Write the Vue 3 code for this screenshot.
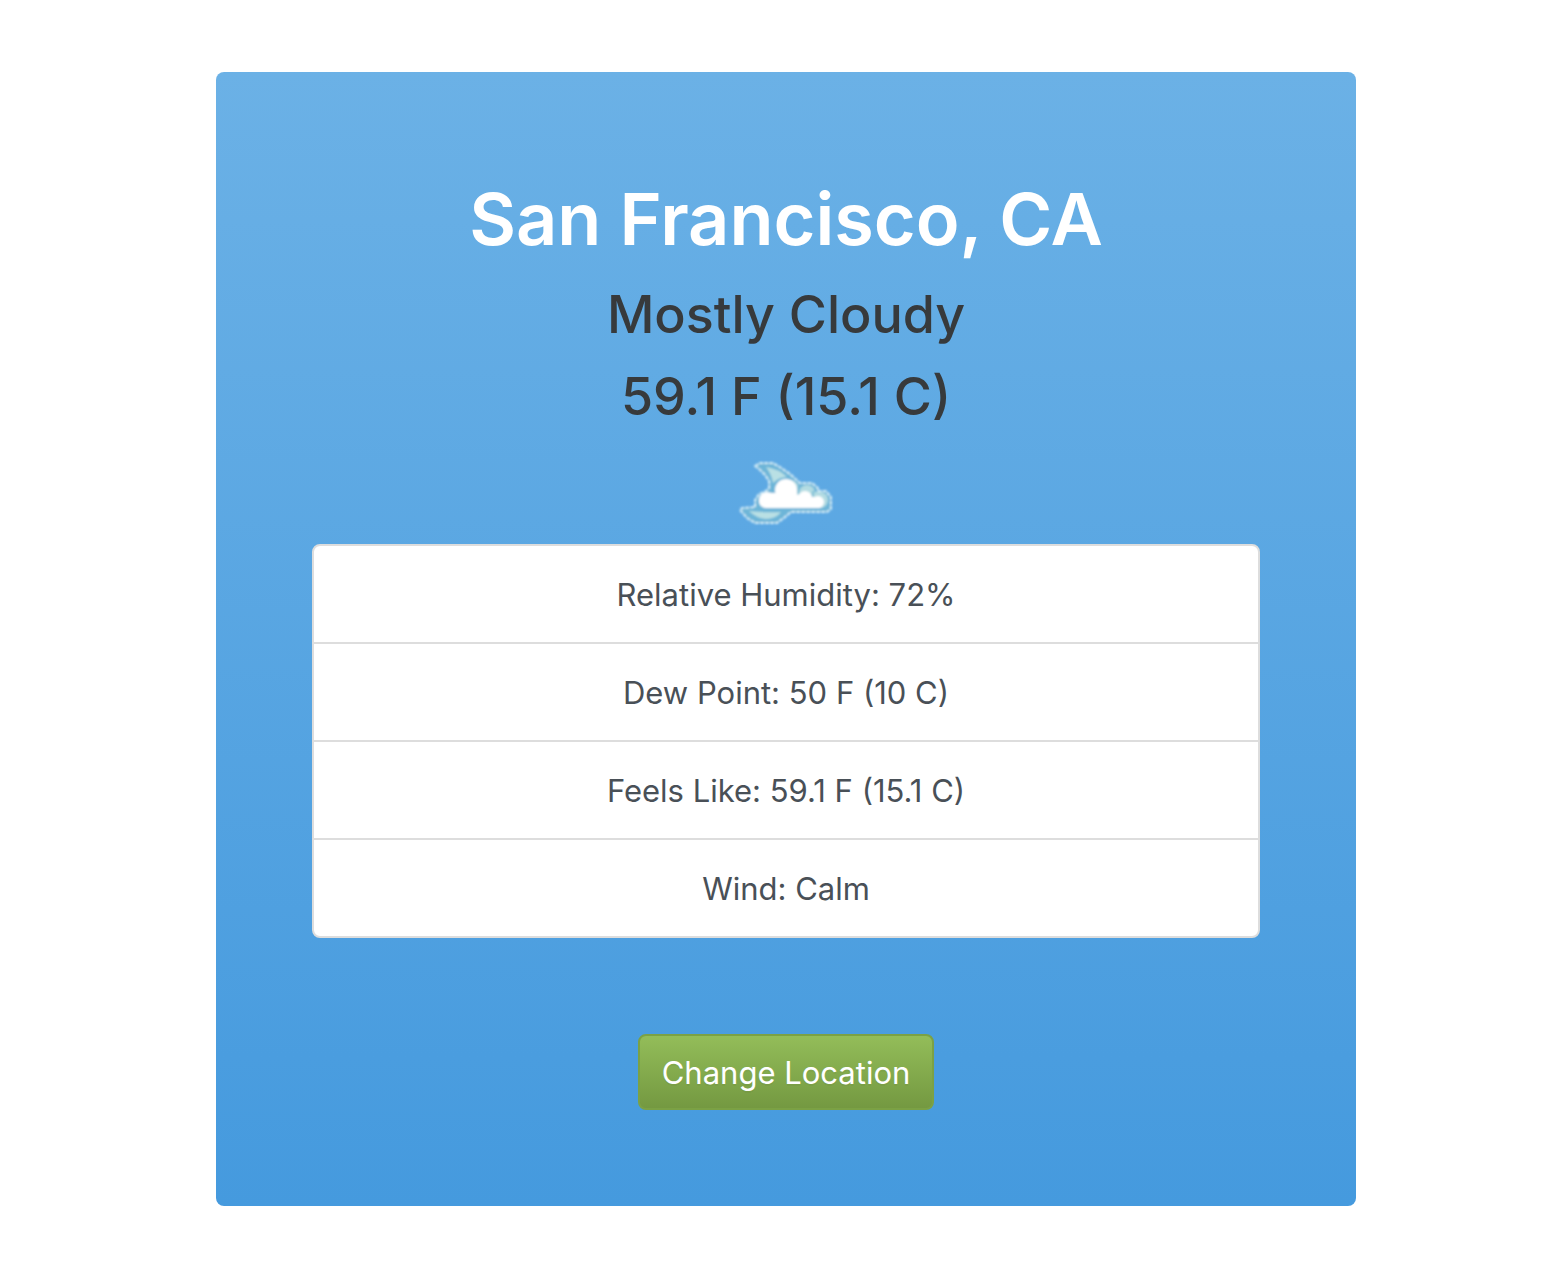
<script setup>
const place = {
  name: 'San Francisco, CA',
  sky: 'Mostly Cloudy',
  temperature: '59.1 F (15.1 C)',
}

const details = [
  { label: 'Relative Humidity', value: '72%' },
  { label: 'Dew Point', value: '50 F (10 C)' },
  { label: 'Feels Like', value: '59.1 F (15.1 C)' },
  { label: 'Wind', value: 'Calm' },
]
</script>

<template>
  <main class="page">
    <section class="card">
      <h1 class="title">{{ place.name }}</h1>
      <h3 class="subtitle">{{ place.sky }}</h3>
      <h3 class="subtitle">{{ place.temperature }}</h3>
      <div class="picture">
        <svg class="cloud" viewBox="0 0 112 84" role="img" aria-label="Mostly cloudy night">
          <defs>
            <filter id="soft" x="-10%" y="-10%" width="120%" height="120%">
              <feGaussianBlur stdDeviation="0.8" />
            </filter>
          </defs>
          <g filter="url(#soft)" stroke-linejoin="round">
            <!-- silhouette of moon and cloud with its pale broken rim -->
            <path
              d="M25 16 L30 13 H43 L50 17 L60 24 L70 33 H82 L88 38 V41 H96 L101 47 V59 L97 62 H61 L54 68 L47 73 H25 L17 68 L10 60 L12 58 L25 57 V50 L29 44 L36 41 L39 38 V31 L35 25 L29 19 Z"
              fill="#6db5d8" stroke="#d3ecf7" stroke-width="2" stroke-dasharray="4 1"
            />
            <!-- lit parts of the crescent -->
            <path d="M36 17 Q49 19 57 27 Q49 27 43 33 Q42 25 36 17 Z" fill="#b9e0e4" />
            <path d="M19 61 Q36 63 51 62 Q46 69 36 69 Q26 68 19 61 Z" fill="#b9e0e4" />
            <!-- shaded side of the cloud -->
            <g fill="#b3dce2">
              <circle cx="60" cy="39" r="9" />
              <circle cx="77" cy="43" r="8" />
              <circle cx="90" cy="50" r="8" />
              <path d="M60 42 H90 V58 H60 Z" />
            </g>
            <path d="M69 35 Q67 39 69 45 M84 41 Q82 43 83 48" fill="none" stroke="#7bbdd6" stroke-width="2" />
            <!-- lit side of the cloud -->
            <g fill="#ffffff">
              <circle cx="37" cy="50" r="8" />
              <circle cx="56" cy="40" r="11" />
              <circle cx="75" cy="48" r="7" />
              <circle cx="88" cy="52" r="6" />
              <path d="M34 43 H46 V38 H67 V45 L76 42 L82 47 H88 L90 58 H37 Q29 58 29 51 Z" />
            </g>
          </g>
        </svg>
      </div>
      <ul class="details">
        <li v-for="item in details" :key="item.label" class="detail">
          {{ item.label }}: {{ item.value }}
        </li>
      </ul>
      <button type="button" class="change">Change Location</button>
    </section>
  </main>
</template>

<style>
body {
  margin: 0;
  background: #ffffff;
}
</style>

<style scoped>
.page {
  box-sizing: border-box;
  padding: 72px 194px 62px 216px;
  font-family: Inter, "Liberation Sans", sans-serif;
}

.card {
  display: flex;
  flex-direction: column;
  align-items: center;
  padding: 96px;
  border-radius: 8px;
  background: linear-gradient(#6bb1e6 0%, #459ade 100%);
  text-align: center;
}

.title,
.subtitle {
  margin: 0 0 12px;
  font-weight: 500;
}

.title {
  margin-bottom: 10px;
  color: #ffffff;
  font-size: 72px;
  font-weight: 600;
  line-height: 102px;
}

.subtitle {
  color: #373a3c;
  font-size: 52px;
  line-height: 70px;
}

.picture {
  display: flex;
  align-items: center;
  height: 100px;
  box-sizing: border-box;
  padding-bottom: 4px;
}

.cloud {
  display: block;
  width: 112px;
  height: 84px;
}

.details {
  box-sizing: border-box;
  width: 100%;
  margin: 0 0 96px;
  padding: 0;
  overflow: hidden;
  border: 2px solid #dddddd;
  border-radius: 8px;
  background: #ffffff;
  list-style: none;
}

.detail {
  padding: 25px 40px 23px;
  color: #495057;
  font-size: 31px;
  line-height: 48px;
}

.detail + .detail {
  border-top: 2px solid #dddddd;
}

.change {
  padding: 13px 22px 11px;
  border: 2px solid #7ba145;
  border-radius: 8px;
  background: linear-gradient(#93bd59, #749941);
  color: #ffffff;
  font-family: inherit;
  font-size: 31px;
  line-height: 48px;
  text-shadow: 0 2px 0 rgba(0, 0, 0, 0.05);
  cursor: pointer;
}
</style>
